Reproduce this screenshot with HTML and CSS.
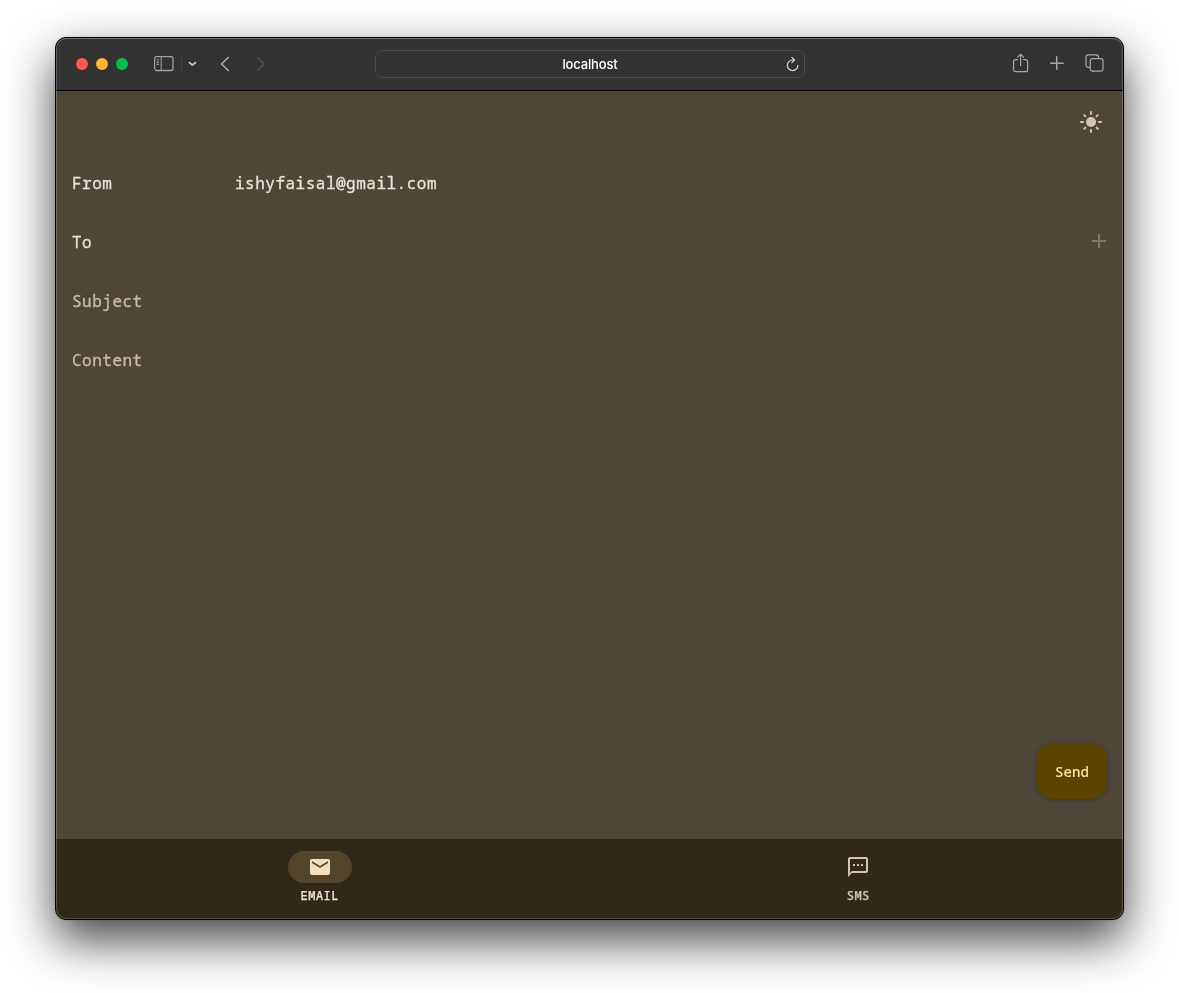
FILE: index.html
```html
<!DOCTYPE html>
<html lang="en">
<head>
<meta charset="utf-8">
<title>localhost</title>
<link rel="stylesheet" href="styles.css">
</head>
<body>
<div class="window">
  <header class="toolbar">
    <div class="tools-left">
      <div class="lights"><span class="light red"></span><span class="light amber"></span><span class="light green"></span></div>
      <svg class="sidebar" width="20" height="16" viewBox="0 0 20 16" fill="none" stroke="#a0a0a0" stroke-width="1.3"><rect x=".6" y=".5" width="18.400" height="14" rx="2.200"/><path d="M7.200 .7v14M2.600 3.800h2.400M2.600 6.100h2.400M2.600 8.400h2.400" stroke-width="1.100"/></svg>
      <span class="divider"></span>
      <svg class="chevron" width="9" height="6" viewBox="0 0 9 6" fill="none" stroke="#c8c8c8" stroke-width="1.600" stroke-linecap="round" stroke-linejoin="round"><path d="M1.300 1.500l3.200 2.500 3.200-2.500"/></svg>
      <svg class="back" width="10" height="16" viewBox="0 0 10 16" fill="none" stroke="#b0b0b0" stroke-width="1.500" stroke-linecap="round" stroke-linejoin="round"><path d="M8.300 1.500L1.500 8l6.800 6.500"/></svg>
      <svg class="forward" width="10" height="16" viewBox="0 0 10 16" fill="none" stroke="#555" stroke-width="1.500" stroke-linecap="round" stroke-linejoin="round"><path d="M1.500 1.500L8.300 8l-6.800 6.500"/></svg>
    </div>
    <div class="address"><span>localhost</span>
      <svg class="reload" width="14" height="16" viewBox="0 0 14 16" fill="none" stroke="#d5d5d5" stroke-width="1.200" stroke-linecap="round" stroke-linejoin="round"><path d="M8.500 4H6.600a5.300 5.300 0 1 0 5.300 5.300M5.900 1.400L8.500 4 5.900 6.600"/></svg>
    </div>
    <div class="tools-right">
      <svg width="16" height="20" viewBox="0 0 16 20" fill="none" stroke="#a8a8a8" stroke-width="1.200" stroke-linecap="round" stroke-linejoin="round"><path d="M4.600 6.700H2.600A2 2 0 0 0 .6 8.700v8a2 2 0 0 0 2 2h10a2 2 0 0 0 2-2v-8a2 2 0 0 0-2-2h-2M7.600 12.500V1.300M4.600 4.200l3-3 3 3"/></svg>
      <svg width="14" height="14" viewBox="0 0 14 14" stroke="#a8a8a8" stroke-width="1.500" stroke-linecap="round"><path d="M6.700 .7v12.600M.5 7.200h12.600"/></svg>
      <svg width="19" height="18" viewBox="0 0 19 18" fill="none" stroke="#a8a8a8" stroke-width="1.200"><rect x="5.300" y="4.600" width="12.700" height="12.600" rx="2.200"/><path d="M5.300 13.300H3.300A2.300 2.300 0 0 1 1 11V3A2.300 2.300 0 0 1 3.300.8h7.900A2.300 2.300 0 0 1 13.500 3v1.600"/></svg>
    </div>
  </header>
  <main class="page">
    <div class="topbar">
      <svg width="24" height="24" viewBox="0 0 24 24" fill="#d3c4b4"><circle cx="12" cy="12" r="5"/><path d="M12 2v2M12 20v2M2 12h2M20 12h2M5.300 5.300l1.100 1.100M17.600 17.600l1.100 1.100M18.700 5.300l-1.100 1.100M6.400 17.600l-1.100 1.100" stroke="#d3c4b4" stroke-width="2" stroke-linecap="round"/></svg>
    </div>
    <form class="fields">
      <div class="row"><span class="label">From</span><span>ishyfaisal@gmail.com</span></div>
      <div class="row"><span class="label">To</span>
        <svg class="add" width="14" height="14" viewBox="0 0 14 14" fill="#82776a"><path d="M14 8H8v6H6V8H0V6h6V0h2v6h6z"/></svg></div>
      <div class="row hint">Subject</div>
      <div class="row hint">Content</div>
    </form>
    <button class="send" type="button">Send</button>
  </main>
  <nav class="nav">
    <div class="tab active">
      <span class="pill"><svg width="24" height="24" viewBox="0 0 24 24" fill="#f8dfbb"><path d="M20 4H4c-1.100 0-1.990.9-1.990 2L2 18c0 1.100.9 2 2 2h16c1.100 0 2-.9 2-2V6c0-1.100-.9-2-2-2zm0 4l-8 5-8-5V6l8 5 8-5v2z"/></svg></span>
      <span>EMAIL</span>
    </div>
    <div class="tab">
      <span class="pill"><svg width="24" height="24" viewBox="0 0 24 24" fill="#d3c4b4"><path d="M20 2H4c-1.100 0-2 .9-2 2v18l4-4h14c1.100 0 2-.9 2-2V4c0-1.100-.9-2-2-2zm0 14H6l-2 2V4h16v12zM7 9h2v2H7zm4 0h2v2h-2zm4 0h2v2h-2z"/></svg></span>
      <span>SMS</span>
    </div>
  </nav>
</div>
</body>
</html>
```
FILE: styles.css
```css
* { box-sizing: border-box; }
body {
  margin: 0;
  height: 993px;
  padding: 37px 55px 73px;
  background: #fff;
  overflow: hidden;
  font-family: "Noto Sans Mono", "DejaVu Sans Mono", monospace;
}
.window {
  position: relative;
  display: flex;
  flex-direction: column;
  width: 1069px;
  height: 883px;
  border: 1px solid #000;
  border-radius: 11px;
  overflow: hidden;
  background: #4e4639;
  box-shadow: 0 20px 48px rgba(0, 0, 0, .74), 0 0 3px rgba(0, 0, 0, .12);
  will-change: transform;
}
/* Light rim along the inside of the window edge */
.window::after {
  content: "";
  position: absolute;
  inset: 0;
  border: 1px solid rgba(255, 255, 255, .2);
  border-top-color: rgba(255, 255, 255, .3);
  border-radius: 10px;
  pointer-events: none;
}
.toolbar {
  display: grid;
  grid-template-columns: 319px 430px 1fr;
  align-items: center;
  height: 53px;
  background: #323232;
  border-bottom: 1px solid #000;
}
.tools-left { display: flex; align-items: center; padding-left: 20px; }
.lights { display: flex; gap: 8px; }
.light { width: 12px; height: 12px; border-radius: 50%; }
.red { background: #ff5850; }
.amber { background: #ffb333; }
.green { background: #00c146; }
.sidebar { margin-left: 26px; }
.divider { width: 1px; height: 18px; margin-left: 7px; background: #444; }
.chevron { margin-left: 6px; }
.back { margin-left: 23px; }
.forward { margin-left: 26px; }
.address {
  display: flex;
  align-items: center;
  justify-content: center;
  position: relative;
  height: 28px;
  border: 1px solid #4b4b4b;
  border-radius: 7px;
  color: #fff;
  font: 500 13px Inter, sans-serif;
  letter-spacing: -.15px;
}
.reload { position: absolute; right: 4px; top: 5px; }
.tools-right { display: flex; align-items: center; justify-content: flex-end; gap: 21px; padding: 0 19px 2px 0; }
.page { display: flex; flex-direction: column; height: 748px; color: #ece1d6; }
.topbar { display: flex; justify-content: flex-end; padding: 19px 20px 20px; }
.fields { display: flex; flex-direction: column; gap: 3px; margin: 0; padding: 1px 16px 0; }
.row { display: flex; align-items: center; height: 56px; font-size: 16px; letter-spacing: .5px; -webkit-text-stroke: .3px; }
.label { width: 163px; }
.add { margin: 0 1px 2px auto; }
.hint { color: #c9bca6; }
.send {
  align-self: flex-end;
  width: 70px;
  height: 56px;
  margin: auto 16px 40px 0;
  padding: 0;
  border: 0;
  border-radius: 16px;
  background: #5b4300;
  color: #ffdf9b;
  font: 500 14px "Noto Sans Mono", "DejaVu Sans Mono", monospace;
  letter-spacing: .1px;
  -webkit-text-stroke: .15px;
  box-shadow: 0 1px 4px rgba(0, 0, 0, .25);
}
.nav { display: grid; grid-template-columns: 1fr 1fr; height: 80px; padding: 12px 1px 16px 0; column-gap: 11px; background: #30291a; }
.tab { display: flex; flex-direction: column; align-items: center; gap: 5px; color: #d3c4b4; font-size: 12px; line-height: 16px; font-weight: 500; letter-spacing: .5px; -webkit-text-stroke: .25px; }
.pill { display: flex; align-items: center; justify-content: center; width: 64px; height: 32px; border-radius: 16px; }
.active { color: #ece1d6; }
.active .pill { background: #53452a; }
```
